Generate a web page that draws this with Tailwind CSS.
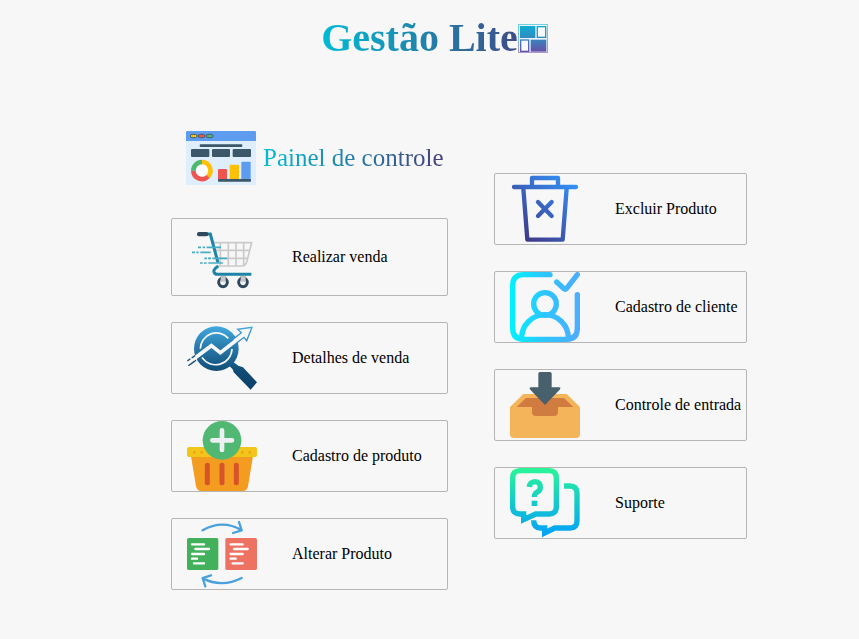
<!DOCTYPE html>
<html lang="pt-BR">
<head>
<meta charset="utf-8">
<meta name="viewport" content="width=device-width, initial-scale=1">
<title>Gestão Lite</title>
<script src="https://cdn.jsdelivr.net/npm/@tailwindcss/browser@4"></script>
</head>
<body class="min-h-screen bg-[#f7f7f7] pb-10 font-['Liberation_Serif','Times_New_Roman',serif] text-base text-black">
<header class="flex items-center justify-center pt-4 pl-[10px]">
  <h1 class="flex items-center bg-linear-to-r/srgb from-[#00bcd4] to-[#483d7b] bg-clip-text text-[40px] leading-[44px] font-bold text-transparent">Gestão Lite
    <svg class="h-[29px] w-[30px] shrink-0" viewBox="621 39 90 87" aria-hidden="true">
      <defs><linearGradient id="logo" x1="0" y1="39" x2="0" y2="126" gradientUnits="userSpaceOnUse"><stop offset="0" stop-color="#09b2d4"/><stop offset=".5" stop-color="#3489c0"/><stop offset="1" stop-color="#6c4ba5"/></linearGradient></defs>
      <rect x="622" y="40" width="88" height="85" fill="#eaf4f8" stroke="url(#logo)" stroke-opacity=".55" stroke-width="4"/>
      <g fill="url(#logo)"><rect x="627" y="45" width="46" height="36"/><rect x="659" y="86" width="47" height="36"/></g>
      <g fill="#f7f9fb" stroke="url(#logo)" stroke-width="4"><rect x="679" y="47" width="25" height="32"/><rect x="629" y="87" width="24" height="34"/></g>
    </svg>
  </h1>
</header>
<main class="flex items-start justify-center gap-[46px] pt-[71px] pl-[59px]">
  <section class="w-[277px] shrink-0">
    <h2 class="mb-[33px] ml-[15px] flex items-center gap-[7px]">
      <svg class="h-[54px] w-[70px] shrink-0" viewBox="48 33 210 162" aria-hidden="true">
        <rect x="48" y="33" width="210" height="162" rx="4" fill="#dfeefd"/>
        <path d="M48 63V37q0-4 4-4h202q4 0 4 4v26z" fill="#5d9cee"/>
        <g stroke="#435f72" stroke-width="3"><rect x="61" y="43" width="20" height="10" rx="5" fill="#ffc107"/><rect x="85" y="43" width="20" height="10" rx="5" fill="#f0544f"/><rect x="109" y="43" width="20" height="10" rx="5" fill="#4db86f"/></g>
        <g fill="#3c566a"><rect x="89" y="73" width="128" height="8" rx="3"/><rect x="63" y="87" width="55" height="24" rx="3"/><rect x="126" y="87" width="54" height="24" rx="3"/><rect x="188" y="87" width="55" height="24" rx="3"/></g>
        <circle cx="96" cy="152" r="25" fill="#fff"/>
        <g fill="none" stroke-width="14"><path d="M96 126A26 26 0 0 1 114 170" stroke="#ffc107"/><path d="M114 170A26 26 0 0 1 70 152" stroke="#f0544f"/><path d="M70 152A26 26 0 0 1 96 126" stroke="#4db86f"/></g>
        <rect x="144" y="147" width="27" height="33" rx="3" fill="#f0544f"/><rect x="179" y="134" width="28" height="46" rx="3" fill="#ffc107"/><rect x="214" y="125" width="28" height="55" rx="3" fill="#5d9cee"/>
        <rect x="144" y="177" width="99" height="8" rx="2" fill="#3c566a"/>
      </svg>
      <span class="bg-linear-to-r/srgb from-[#00bcd4] to-[#483d7b] bg-clip-text text-[25px] leading-8 font-normal whitespace-nowrap text-transparent">Painel de controle</span>
    </h2>
    <nav aria-label="Vendas e produtos" class="flex flex-col gap-[26px]">
      <a href="#venda" class="flex items-center gap-[35px] rounded-xs border border-[#b5b5b5] pr-1 pl-[15px]">
        <svg class="h-[76px] w-[70px] shrink-0" viewBox="66 27 210 228" aria-hidden="true">
          <g fill="none" stroke="#cacaca" stroke-width="5" stroke-linejoin="round"><path d="M146 98H260L246 153Q242 168 231 168H160M150 121H254M156 145H248M166 98V168M190 98V168M213 98V168M236 98V165"/></g>
          <path d="M166 198h18l1 18h-20zM225 198h18l1 18h-20z" fill="#c6c6c6"/>
          <path d="M126 72h10l23 86M160 168c-14 9-15 16-12 20q2 5 9 5H259" fill="none" stroke="#1d83a7" stroke-width="9"/>
          <rect x="96" y="66" width="34" height="13" rx="6" fill="#30485d"/>
          <g fill="#f0f2f3" stroke="#30485d" stroke-width="9"><circle cx="174" cy="217" r="13"/><circle cx="234" cy="217" r="13"/></g>
          <path d="M167 199h15v16h-15zM227 199h15v16h-15z" fill="#c6c6c6"/>
          <path d="M99 112h9m5 0h7m5 0h43M81 127h9m4 0h7m5 0h31M118 145h8m3 0h9m4 0h45M105 159h8m4 0h8m5 0h43" fill="none" stroke="#46adc5" stroke-width="5"/>
        </svg>
        <span class="whitespace-nowrap">Realizar venda</span>
      </a>
      <a href="#detalhes" class="flex items-center gap-[35px] rounded-xs border border-[#b5b5b5] pr-1 pl-[15px]">
        <svg class="size-[70px] shrink-0" viewBox="66 24 210 210" aria-hidden="true">
          <defs><linearGradient id="lens" x1="0" y1="34" x2="0" y2="215" gradientUnits="userSpaceOnUse"><stop stop-color="#41a8df"/><stop offset=".35" stop-color="#287aab"/><stop offset=".75" stop-color="#104b75"/><stop offset="1" stop-color="#0d426a"/></linearGradient></defs>
          <g fill="url(#lens)"><circle cx="154" cy="101" r="67"/><path d="M190 150l12-11 18 13 14 5 42 45-19 22-51-52-3-9z"/></g>
          <path d="M106 101a48 48 0 0 1 84-31M111 127a49 49 0 0 0 90-25" fill="none" stroke="#f7f7f7" stroke-width="5"/>
          <path d="M70 144L139 92l27 21 70-54" fill="none" stroke="#f7f7f7" stroke-width="11"/>
          <path d="M67 138l9-7M70 152l18-13M80 129l10-7M77 148l16-12" stroke="#174f78" stroke-width="4"/>
          <path d="M205 72l24-19-11-10 43-6-16 40-8-10-22 17" fill="#f7f7f7" stroke="url(#lens)" stroke-width="4"/>
        </svg>
        <span class="whitespace-nowrap">Detalhes de venda</span>
      </a>
      <a href="#produto" class="flex items-center gap-[35px] rounded-xs border border-[#b5b5b5] pr-1 pl-[15px]">
        <svg class="size-[70px] shrink-0" viewBox="66 24 210 210" aria-hidden="true">
          <path d="M78 130H264L249 220Q247 234 233 234H109Q96 234 93 220z" fill="#f39c1f"/>
          <rect x="66" y="102" width="210" height="30" rx="6" fill="#f2c51b"/>
          <g fill="#f39c1f"><circle cx="88" cy="118" r="4"/><circle cx="110" cy="118" r="4"/><circle cx="232" cy="118" r="4"/><circle cx="254" cy="118" r="4"/></g>
          <path d="M127 157v52M171 157v52M214 157v52" stroke="#d75429" stroke-width="15" stroke-linecap="round"/>
          <circle cx="171" cy="82" r="58" fill="#50b872"/>
          <path d="M171 52v59M142 82h59" stroke="#edf0f2" stroke-width="14" stroke-linecap="round"/>
        </svg>
        <span class="whitespace-nowrap">Cadastro de produto</span>
      </a>
      <a href="#alterar" class="flex items-center gap-[35px] rounded-xs border border-[#b5b5b5] pr-1 pl-[15px]">
        <svg class="size-[70px] shrink-0" viewBox="66 24 210 210" aria-hidden="true">
          <rect x="66" y="81" width="94" height="96" rx="5" fill="#43b05c"/><rect x="181" y="81" width="95" height="96" rx="5" fill="#ee7261"/>
          <g fill="none" stroke="#fff" stroke-width="7" stroke-linecap="round"><path id="rows" d="M81 100h36M91 114h41M81 129h36M81 143h15M87 157h30"/><use href="#rows" x="116"/></g>
          <g fill="none" stroke="#48a0dc" stroke-width="7" stroke-linecap="round" stroke-linejoin="round"><path d="M113 58Q172 24 230 58M222 33l8 25-26 8M230 201Q171 231 113 202M138 193l-25 8 8 25"/></g>
        </svg>
        <span class="whitespace-nowrap">Alterar Produto</span>
      </a>
    </nav>
  </section>
  <nav aria-label="Cadastros e suporte" class="flex w-[253px] shrink-0 flex-col gap-[26px] pt-[42px]">
    <a href="#excluir" class="flex items-center gap-[35px] rounded-xs border border-[#b5b5b5] pr-1 pl-[15px]">
      <svg class="size-[70px] shrink-0" viewBox="60 27 210 210" aria-hidden="true">
        <defs><linearGradient id="bin" x1="110" y1="231" x2="258" y2="60" gradientUnits="userSpaceOnUse"><stop stop-color="#403887"/><stop offset="1" stop-color="#3390f6"/></linearGradient></defs>
        <g fill="none" stroke="url(#bin)" stroke-width="13" stroke-linecap="round" stroke-linejoin="round"><path d="M72 66h186M126 64V39h78v25M100 70l12 154h106l12-154"/><path d="M144 111l41 42M185 111l-41 42"/></g>
      </svg>
      <span class="whitespace-nowrap">Excluir Produto</span>
    </a>
    <a href="#cliente" class="flex items-center gap-[35px] rounded-xs border border-[#b5b5b5] pr-1 pl-[15px]">
      <svg class="size-[70px] shrink-0" viewBox="60 21 210 210" aria-hidden="true">
        <defs><linearGradient id="client" x1="60" y1="0" x2="270" y2="0" gradientUnits="userSpaceOnUse"><stop stop-color="#00f2fe"/><stop offset=".5" stop-color="#2dc5ff"/><stop offset="1" stop-color="#4facfe"/></linearGradient></defs>
        <g fill="none" stroke="url(#client)" stroke-width="16" stroke-linecap="round" stroke-linejoin="round"><path d="M180 29H101Q68 29 68 62V190Q68 223 101 223H230Q262 223 262 190V89M200 51l22 20q4 4 8-1l32-41M95 219a70 70 0 0 1 140 0"/><circle cx="165" cy="117" r="34"/></g>
      </svg>
      <span class="whitespace-nowrap">Cadastro de cliente</span>
    </a>
    <a href="#entrada" class="flex items-center gap-[35px] rounded-xs border border-[#b5b5b5] pr-1 pl-[15px]">
      <svg class="size-[70px] shrink-0" viewBox="60 21 210 210" aria-hidden="true">
        <path d="M60 132L100 93H230l40 39v81q0 12-12 12H72q-12 0-12-12z" fill="#f4b459"/>
        <path d="M80 132l28-27H222l28 27H204v15q0 12-12 12H138q-12 0-12-12v-15z" fill="#d07c40"/>
        <path d="M145 32q0-5 5-5h30q5 0 5 5v41h21q9 0 3 7l-44 46-44-46q-6-7 3-7h21z" fill="#485f6c"/>
      </svg>
      <span class="whitespace-nowrap">Controle de entrada</span>
    </a>
    <a href="#suporte" class="flex items-center gap-[35px] rounded-xs border border-[#b5b5b5] pr-1 pl-[15px]">
      <svg class="size-[70px] shrink-0" viewBox="60 21 210 210" aria-hidden="true">
        <defs><linearGradient id="chat" x1="0" y1="21" x2="0" y2="231" gradientUnits="userSpaceOnUse"><stop stop-color="#2af598"/><stop offset="1" stop-color="#009efd"/></linearGradient></defs>
        <g fill="none" stroke="url(#chat)" stroke-width="16"><path d="M90 29H178Q199 29 199 51V137Q199 159 178 159H137L101 176V159H90Q68 159 68 137V51Q68 29 90 29z"/><path d="M222 75h18q21 0 21 22v83q0 21-21 21h-46l-30 15v-15h-12q-21 0-21-23"/><path d="M118 78q1-15 17-16 16 1 16 17 0 10-9 14-9 5-9 15"/></g>
        <rect x="125" y="119" width="17" height="16" fill="url(#chat)"/>
      </svg>
      <span class="whitespace-nowrap">Suporte</span>
    </a>
  </nav>
</main>
</body>
</html>
